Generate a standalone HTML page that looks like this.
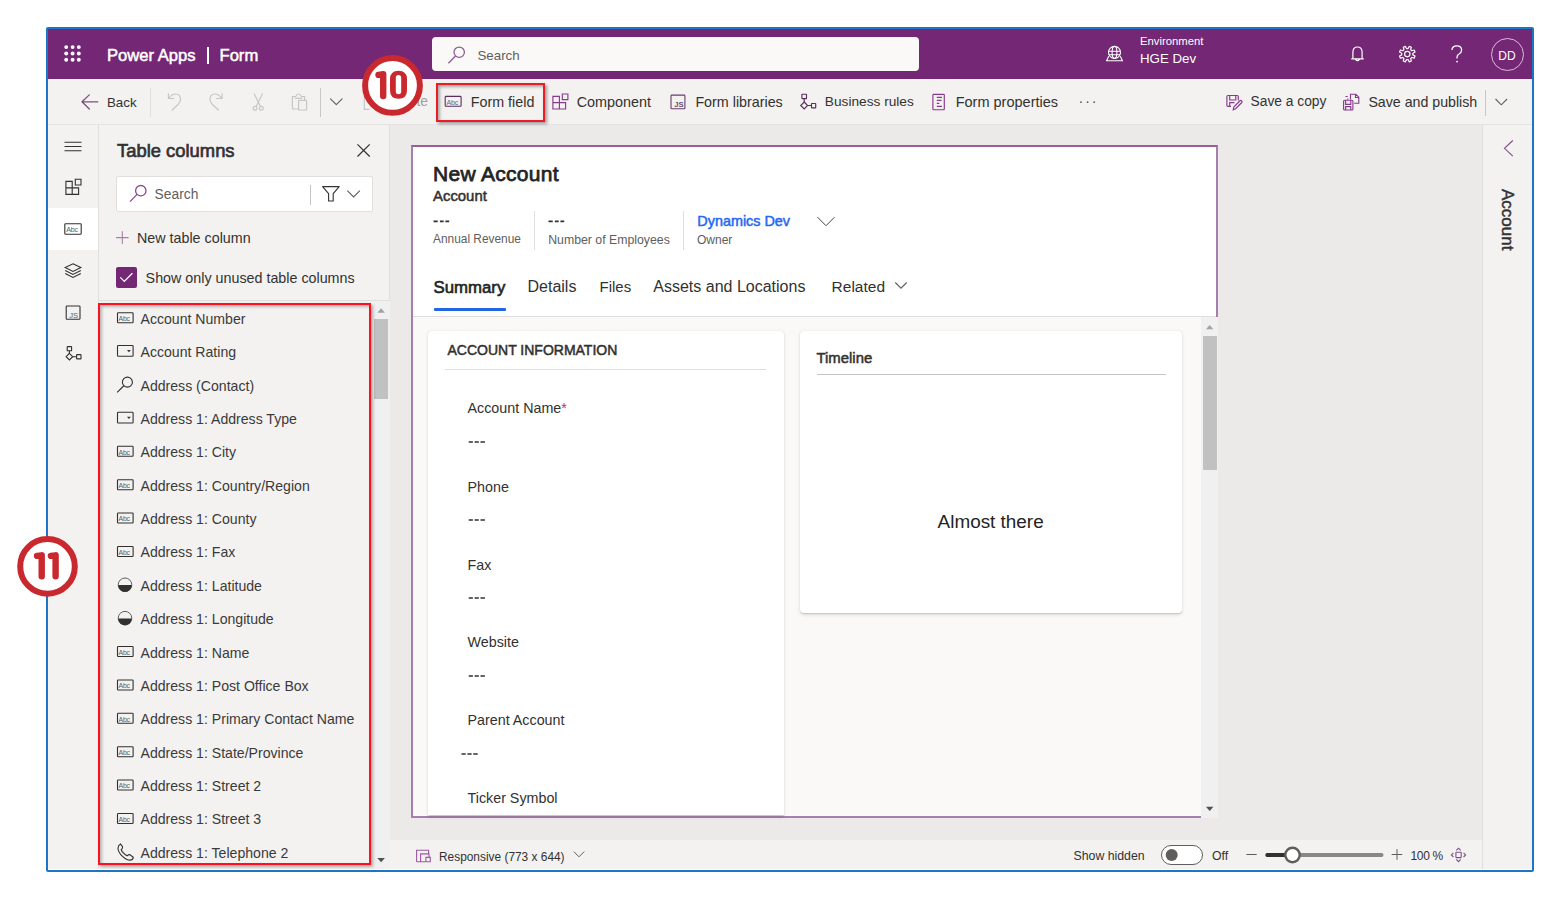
<!DOCTYPE html>
<html><head><meta charset="utf-8">
<style>
*{box-sizing:border-box;margin:0;padding:0}
html,body{width:1564px;height:900px;overflow:hidden;background:#fff;font-family:"Liberation Sans",sans-serif;color:#323130}
.a{position:absolute}
.t{position:absolute;white-space:nowrap;line-height:1}
svg{position:absolute;overflow:visible}
</style></head><body>
<!-- frame -->
<div class="a" style="left:46px;top:27px;width:1488px;height:845px;border:2px solid #1c76c4;border-radius:2px"></div>
<!-- header -->
<div class="a" style="left:48px;top:29px;width:1484px;height:50px;background:#742774"></div>
<!-- command bar -->
<div class="a" style="left:48px;top:79px;width:1484px;height:46px;background:#f3f2f1"></div>
<!-- left rail -->
<div class="a" style="left:48px;top:125px;width:51px;height:744px;background:#f3f2f1;border-right:1px solid #e1dfdd"></div>
<!-- panel -->
<div class="a" style="left:99px;top:125px;width:291px;height:744px;background:#f3f2f1;border-right:1px solid #e1dfdd"></div>
<!-- canvas -->
<div class="a" style="left:390px;top:125px;width:1093px;height:715px;background:#ebeae9"></div>
<!-- status bar -->
<div class="a" style="left:390px;top:840px;width:1093px;height:29px;background:#f3f2f1"></div>
<!-- right pane -->
<div class="a" style="left:1482px;top:125px;width:50px;height:744px;background:#f3f2f1;border-left:1px solid #e1dfdd"></div>
<!-- form card -->
<div class="a" style="left:411px;top:145px;width:807px;height:673px;background:#faf9f8;border:2px solid #a67fae;border-top-color:#985e9c"></div>
<div class="a" style="left:413px;top:147px;width:803px;height:170px;background:#fff;border-bottom:1px solid #e1dfdd"></div>

<!-- HEADER CONTENT -->
<svg style="left:0;top:0" width="1" height="1">
<g fill="#fff"><circle cx="66.2" cy="47.1" r="1.95"/><circle cx="72.6" cy="47.1" r="1.95"/><circle cx="78.8" cy="47.1" r="1.95"/><circle cx="66.2" cy="53.5" r="1.95"/><circle cx="72.6" cy="53.5" r="1.95"/><circle cx="78.8" cy="53.5" r="1.95"/><circle cx="66.2" cy="59.7" r="1.95"/><circle cx="72.6" cy="59.7" r="1.95"/><circle cx="78.8" cy="59.7" r="1.95"/></g>
</svg>
<div class="t" style="left:107px;top:47.5px;font-size:16.6px;color:#fff;-webkit-text-stroke:0.5px #fff">Power Apps</div>
<div class="a" style="left:207px;top:47px;width:1.6px;height:17px;background:#fff"></div>
<div class="t" style="left:219.5px;top:47.5px;font-size:16.6px;color:#fff;-webkit-text-stroke:0.5px #fff">Form</div>
<div class="a" style="left:432px;top:37px;width:487px;height:34px;background:#faf9f8;border-radius:4px"></div>
<svg style="left:0;top:0" width="1" height="1"><g fill="none" stroke="#8a5a8f" stroke-width="1.25"><circle cx="459.2" cy="52.2" r="5.2"/><path d="M455.5 56 L448.4 63.2"/></g></svg>
<div class="t" style="left:477.5px;top:49.1px;font-size:13.3px;color:#605e5c">Search</div>
<svg style="left:0;top:0" width="1" height="1"><g fill="none" stroke="#fff" stroke-width="1.1">
<circle cx="1114.5" cy="52.4" r="6"/><path d="M1108.8 51.2 H1120.2 M1109 54.8 H1120"/><ellipse cx="1114.5" cy="52.4" rx="2.4" ry="6"/>
<path d="M1108.7 56.2 L1106.6 60.7 H1122.4 L1120.3 56.2"/></g></svg>
<div class="t" style="left:1140px;top:36.4px;font-size:11.3px;color:#fff">Environment</div>
<div class="t" style="left:1140px;top:52.2px;font-size:13.3px;color:#fff">HGE Dev</div>
<svg style="left:0;top:0" width="1" height="1"><g fill="none" stroke="#fff" stroke-width="1.2">
<path d="M1351.2 58.8 H1363.8 M1352.9 58.8 V52.3 Q1352.9 47 1357.5 47 Q1362.1 47 1362.1 52.3 V58.8 M1355.4 59.1 Q1357.5 62.3 1359.6 59.1"/>
</g></svg>
<svg style="left:0;top:0" width="1" height="1"><g fill="none" stroke="#fff" stroke-width="1.2">
<path d="M1409.30 46.35 L1411.36 47.21 L1410.67 49.63 L1411.77 50.73 L1414.19 50.04 L1415.05 52.10 L1412.85 53.32 L1412.85 54.88 L1415.05 56.10 L1414.19 58.16 L1411.77 57.47 L1410.67 58.57 L1411.36 60.99 L1409.30 61.85 L1408.08 59.65 L1406.52 59.65 L1405.30 61.85 L1403.24 60.99 L1403.93 58.57 L1402.83 57.47 L1400.41 58.16 L1399.55 56.10 L1401.75 54.88 L1401.75 53.32 L1399.55 52.10 L1400.41 50.04 L1402.83 50.73 L1403.93 49.63 L1403.24 47.21 L1405.30 46.35 L1406.52 48.55 L1408.08 48.55 Z" stroke-linejoin="round"/>
<circle cx="1407.3" cy="54.1" r="2.7"/></g></svg>
<svg style="left:0;top:0" width="1" height="1"><g fill="none" stroke="#fff" stroke-width="1.3">
<path d="M1452 50 Q1452 45.8 1456.8 45.8 Q1461.6 45.8 1461.6 50 Q1461.6 52.6 1459 54 Q1457 55 1457 57.5 V58.5"/></g><circle cx="1457" cy="61.6" r="0.9" fill="#fff"/></svg>
<div class="a" style="left:1490.5px;top:37.5px;width:33px;height:33px;border:1.2px solid #d6bdd6;border-radius:50%"></div>
<div class="t" style="left:1490.5px;top:50.2px;width:33px;text-align:center;font-size:12px;color:#fff">DD</div>

<!-- COMMAND BAR CONTENT -->
<div class="a" style="left:48px;top:124px;width:1484px;height:1px;background:#e6e4e2"></div>
<svg style="left:0;top:0" width="1" height="1"><g fill="none" stroke-width="1.3" stroke-linecap="round" stroke-linejoin="round">
<path d="M89.3 94.9 L82 101.8 L89.3 109 M82.5 101.8 H97.8" stroke="#7d4f80"/>
<g stroke="#c8c6c4" stroke-width="1.2">
<path d="M168.4 93.9 V98.5 H173.8 M168.8 98.2 Q172 94 175.5 94 Q180.5 94 180.5 99.5 Q180.5 102 178 104.5 L172.2 110"/>
<path d="M222.1 93.9 V98.5 H216.7 M221.7 98.2 Q218.5 94 215 94 Q210 94 210 99.5 Q210 102 212.5 104.5 L218.3 110"/>
<path d="M254.3 94 L260.3 106.3 M262.3 94 L256.3 106.3"/><circle cx="255" cy="108.2" r="1.9"/><circle cx="261.3" cy="108.2" r="1.9"/>
<path d="M298.4 109 H292.4 V96.6 H295.7 Q296.6 94 298.5 94 Q300.4 94 301.3 96.6 H304.6 V100 M295.5 98.3 H301.6"/><rect x="298.6" y="100.4" width="8" height="9.6" rx="0.6"/>
<path d="M364.3 96 V109.4 H369"/>
</g>
<path d="M330.5 98.8 L336.3 104.6 L342.1 98.8" stroke="#605e5c" stroke-width="1.1"/>
</g></svg>
<div class="a" style="left:149.5px;top:87.5px;width:1px;height:29px;background:#e1dfdd"></div>
<div class="a" style="left:320px;top:87.5px;width:1px;height:29px;background:#c8c6c4"></div>
<div class="t" style="left:107px;top:95.74px;font-size:13.3px;color:#323130">Back</div>
<div class="t" style="left:388px;top:95.32px;font-size:13.8px;color:#a19f9d">Delete</div>
<!-- badge 10 -->
<svg style="left:0;top:0" width="1" height="1">
<circle cx="392.5" cy="85.4" r="27.4" fill="#fff" stroke="#c9282f" stroke-width="6"/>
<path d="M378.5 74.8 L383.2 74.2 V96" fill="none" stroke="#c9282f" stroke-width="6.4" stroke-linecap="round" stroke-linejoin="round"/>
<path d="M390 79.2 Q390 70.7 398.5 70.7 Q407 70.7 407 79.2 V90.3 Q407 98.8 398.5 98.8 Q390 98.8 390 90.3 Z M395.8 77.7 Q395.8 75 398.5 75 Q401.2 75 401.2 77.7 V91.5 Q401.2 94.2 398.5 94.2 Q395.8 94.2 395.8 91.5 Z" fill="#c9282f" fill-rule="evenodd"/>
</svg>
<!-- form field highlight -->
<div class="a" style="left:436px;top:82.5px;width:108.5px;height:39px;border:2px solid #ec1c24;box-shadow:2px 2px 3px rgba(0,0,0,0.35), inset 2px 2px 3px rgba(0,0,0,0.3)"></div>
<svg style="left:0;top:0" width="1" height="1"><g fill="none" stroke-width="1.1">
<rect x="445.2" y="96.4" width="15.9" height="9.9" rx="0.8" stroke="#5a2f5c"/>
<g stroke="#883a8c" stroke-width="1.15">
<path d="M552.9 96.3 H559.4 V109 H552.9 Z M552.9 102.6 H565.6 V109 H559.4 M562.3 94 H567.9 V99.6 H562.3 Z"/>
</g>
<rect x="671" y="95.1" width="13.9" height="13.7" rx="0.8" stroke="#6b3a6e"/>
<g stroke="#5a2f5c" stroke-width="1.15">
<rect x="801.9" y="94.2" width="4.6" height="4.4" rx="0.4"/><path d="M804.2 98.6 V102 M807.6 105.5 H811.5"/><path d="M804.2 102 L807.6 105.5 L804.2 109 L800.7 105.5 Z"/><rect x="811.5" y="103.5" width="4.2" height="4.3" rx="0.4"/>
</g>
<g stroke="#883a8c" stroke-width="1.15">
<rect x="932.9" y="94.3" width="11.4" height="15.4" rx="0.8"/><path d="M936.8 97.4 H942 M936.8 100.4 H941.5 M936.8 103.4 H939.3 M936.8 106.4 H942"/>
</g>
<g stroke="#883a8c" stroke-width="1.15">
<path d="M1231 106.4 H1228 Q1226.9 106.4 1226.9 105.3 V96.6 Q1226.9 95.5 1228 95.5 H1237.2 Q1238.3 95.5 1238.3 96.6 V100.5 M1229.7 95.5 V100 H1235.8 V95.5 M1229.7 106.2 V102.6 H1234.5"/>
<path d="M1233.2 109.8 L1233.8 107 L1240 100.8 Q1241 100 1241.8 100.8 Q1242.5 101.6 1241.8 102.5 L1235.6 108.7 Z"/>
</g>
<g stroke="#883a8c" stroke-width="1.15">
<rect x="1343.6" y="100.2" width="9.3" height="9.8" rx="1"/><path d="M1345.6 100.2 V104.3 H1350.8 V100.2 M1345.6 110 V106.6 H1350.8 V110 M1350.5 99.5 V94.2 H1355.8 L1358.8 97.2 V103.2 H1354.2 M1355.5 94.2 V97.5 H1358.8 M1345.5 96.5 H1347.7 M1347.7 98.5 V99.5"/>
</g>
</g>
<text x="446.6" y="104.6" font-family="Liberation Sans" font-size="7.2" fill="#6a6a80" letter-spacing="-0.3">Abc</text>
<text x="674.2" y="106.6" font-family="Liberation Sans" font-size="7.6" font-weight="700" fill="#6b4a6e">JS</text>
<g fill="#605e5c"><circle cx="1081" cy="102.2" r="0.9"/><circle cx="1087.6" cy="102.2" r="0.9"/><circle cx="1094.2" cy="102.2" r="0.9"/></g>
<path d="M1495.5 99 L1501.3 104.8 L1507.1 99" fill="none" stroke="#605e5c" stroke-width="1.1"/>
</svg>
<div class="a" style="left:1485px;top:90px;width:1px;height:26px;background:#c8c6c4"></div>
<div class="t" style="left:470.8px;top:94.9px;font-size:14.3px;color:#323130">Form field</div>
<div class="t" style="left:576.7px;top:94.81px;font-size:14.4px;color:#323130">Component</div>
<div class="t" style="left:695.4px;top:94.9px;font-size:14.3px;color:#323130">Form libraries</div>
<div class="t" style="left:824.8px;top:95.4px;font-size:13.7px;color:#323130">Business rules</div>
<div class="t" style="left:955.7px;top:94.73px;font-size:14.5px;color:#323130">Form properties</div>
<div class="t" style="left:1250.5px;top:95.32px;font-size:13.8px;color:#323130">Save a copy</div>
<div class="t" style="left:1368.4px;top:94.98px;font-size:14.2px;color:#323130">Save and publish</div>

<!-- RAIL -->
<div class="a" style="left:48px;top:208px;width:50px;height:42px;background:#fff"></div>
<svg style="left:0;top:0" width="1" height="1"><g fill="none" stroke="#323130" stroke-width="1.1">
<path d="M64.5 142.2 H81.5 M64.5 146.5 H81.5 M64.5 150.8 H81.5"/>
<path d="M65.9 181.4 H72.2 V194.4 H65.9 Z M65.9 187.9 H78.6 V194.4 H72.2 M75.3 179.3 H81 V185 H75.3 Z"/>
<rect x="64.8" y="223.8" width="16.4" height="10.4" rx="0.8"/>
<path d="M73 263.8 L80.8 267.6 L73 271.4 L65.2 267.6 Z M65.2 270.6 L73 274.4 L80.8 270.6 M65.2 273.6 L73 277.4 L80.8 273.6"/>
<rect x="66.2" y="306" width="13.8" height="13.2" rx="0.8"/>
<rect x="67.2" y="346.6" width="4.4" height="4.2" rx="0.4"/><path d="M69.4 350.8 V353.4 M72.7 356.7 H76.6"/><path d="M69.4 353.4 L72.7 356.7 L69.4 360 L66.1 356.7 Z"/><rect x="76.6" y="354.6" width="4.4" height="4.3" rx="0.4"/>
</g>
<text x="66.3" y="232" font-family="Liberation Sans" font-size="7.2" fill="#605e5c" letter-spacing="-0.3">Abc</text>
<text x="69.3" y="317.6" font-family="Liberation Sans" font-size="7.6" fill="#605e5c">JS</text>
</svg>

<!-- PANEL -->
<div class="t" style="left:117px;top:142.42px;font-size:18.4px;color:#323130;-webkit-text-stroke:0.65px #323130">Table columns</div>
<svg style="left:0;top:0" width="1" height="1"><path d="M357.5 144.3 L369.7 156.5 M369.7 144.3 L357.5 156.5" fill="none" stroke="#323130" stroke-width="1.2"/></svg>
<div class="a" style="left:116px;top:176px;width:256.5px;height:35.5px;background:#fff;border:1px solid #e1dfdd;border-radius:2px"></div>
<svg style="left:0;top:0" width="1" height="1"><g fill="none" stroke-width="1.3">
<circle cx="140.8" cy="190.7" r="5.2" stroke="#8a4a8e"/><path d="M137.1 194.4 L130 201.6" stroke="#8a4a8e"/>
<path d="M322.6 186.6 H339.2 L333.2 193.6 V201 H328.6 V193.6 Z" stroke="#323130" stroke-width="1.1" stroke-linejoin="round"/>
<path d="M347.3 190.7 L353.6 197 L359.9 190.7" stroke="#605e5c" stroke-width="1.1"/>
<path d="M116 237.6 H128.6 M122.3 231.3 V243.9" stroke="#a881ab" stroke-width="1.1"/>
</g></svg>
<div class="a" style="left:310px;top:185px;width:1px;height:20px;background:#c8c6c4"></div>
<div class="t" style="left:154.6px;top:188.1px;font-size:13.8px;color:#605e5c">Search</div>
<div class="t" style="left:137px;top:230.9px;font-size:14.3px;color:#323130">New table column</div>
<div class="a" style="left:116px;top:267px;width:20.5px;height:20.5px;background:#742774;border-radius:2px"></div>
<svg style="left:0;top:0" width="1" height="1"><path d="M120.3 277.4 L124.3 281.4 L132.4 273.3" fill="none" stroke="#fff" stroke-width="1.3"/></svg>
<div class="t" style="left:145.6px;top:270.9px;font-size:14.3px;color:#323130">Show only unused table columns</div>
<div class="a" style="left:99px;top:300px;width:290px;height:1px;background:#e1dfdd"></div>

<!-- LIST -->
<div class="t" style="left:140.5px;top:311.77px;font-size:14.1px;color:#3b3a39">Account Number</div>
<div class="t" style="left:140.5px;top:345.14px;font-size:14.1px;color:#3b3a39">Account Rating</div>
<div class="t" style="left:140.5px;top:378.52px;font-size:14.1px;color:#3b3a39">Address (Contact)</div>
<div class="t" style="left:140.5px;top:411.89px;font-size:14.1px;color:#3b3a39">Address 1: Address Type</div>
<div class="t" style="left:140.5px;top:445.27px;font-size:14.1px;color:#3b3a39">Address 1: City</div>
<div class="t" style="left:140.5px;top:478.64px;font-size:14.1px;color:#3b3a39">Address 1: Country/Region</div>
<div class="t" style="left:140.5px;top:512.02px;font-size:14.1px;color:#3b3a39">Address 1: County</div>
<div class="t" style="left:140.5px;top:545.39px;font-size:14.1px;color:#3b3a39">Address 1: Fax</div>
<div class="t" style="left:140.5px;top:578.77px;font-size:14.1px;color:#3b3a39">Address 1: Latitude</div>
<div class="t" style="left:140.5px;top:612.14px;font-size:14.1px;color:#3b3a39">Address 1: Longitude</div>
<div class="t" style="left:140.5px;top:645.52px;font-size:14.1px;color:#3b3a39">Address 1: Name</div>
<div class="t" style="left:140.5px;top:678.89px;font-size:14.1px;color:#3b3a39">Address 1: Post Office Box</div>
<div class="t" style="left:140.5px;top:712.27px;font-size:14.1px;color:#3b3a39">Address 1: Primary Contact Name</div>
<div class="t" style="left:140.5px;top:745.64px;font-size:14.1px;color:#3b3a39">Address 1: State/Province</div>
<div class="t" style="left:140.5px;top:779.02px;font-size:14.1px;color:#3b3a39">Address 1: Street 2</div>
<div class="t" style="left:140.5px;top:812.39px;font-size:14.1px;color:#3b3a39">Address 1: Street 3</div>
<div class="t" style="left:140.5px;top:845.77px;font-size:14.1px;color:#3b3a39">Address 1: Telephone 2</div>
<svg style="left:0;top:0" width="1" height="1"><g fill="none" stroke="#323130" stroke-width="1.1">
<rect x="117.5" y="312.80" width="15.6" height="10" rx="0.7"/>
<rect x="117.5" y="345.57" width="15.6" height="10.7" rx="0.8"/>
<circle cx="127.4" cy="382.15" r="5"/><path d="M123.8 385.75 L117.2 392.35"/>
<rect x="117.5" y="412.32" width="15.6" height="10.7" rx="0.8"/>
<rect x="117.5" y="446.30" width="15.6" height="10" rx="0.7"/>
<rect x="117.5" y="479.68" width="15.6" height="10" rx="0.7"/>
<rect x="117.5" y="513.05" width="15.6" height="10" rx="0.7"/>
<rect x="117.5" y="546.43" width="15.6" height="10" rx="0.7"/>
<circle cx="125" cy="584.80" r="6.8" stroke="#605e5c" stroke-width="1"/>
<circle cx="125" cy="618.18" r="6.8" stroke="#605e5c" stroke-width="1"/>
<rect x="117.5" y="646.55" width="15.6" height="10" rx="0.7"/>
<rect x="117.5" y="679.93" width="15.6" height="10" rx="0.7"/>
<rect x="117.5" y="713.30" width="15.6" height="10" rx="0.7"/>
<rect x="117.5" y="746.68" width="15.6" height="10" rx="0.7"/>
<rect x="117.5" y="780.05" width="15.6" height="10" rx="0.7"/>
<rect x="117.5" y="813.43" width="15.6" height="10" rx="0.7"/>
<path d="M120.5 844.00 Q118 845.30 118 848.30 Q118 852.30 122.5 856.30 Q126.5 860.10 130 860.10 Q132.8 860.10 133.3 857.30 L130 854.80 Q128.8 854.30 127.8 855.30 L127 855.80 Q125.5 855.30 123.6 853.20 Q121.6 851.30 121.2 849.60 L122 848.80 Q123 847.80 122.4 846.60 Z"/>
</g>
<text x="118.6" y="321.00" font-family="Liberation Sans" font-size="7" fill="#605e5c" letter-spacing="-0.3">Abc</text>
<path d="M127 350.07 H130.8 L128.9 352.18 Z" fill="#323130"/>
<path d="M127 416.82 H130.8 L128.9 418.93 Z" fill="#323130"/>
<text x="118.6" y="454.50" font-family="Liberation Sans" font-size="7" fill="#605e5c" letter-spacing="-0.3">Abc</text>
<text x="118.6" y="487.88" font-family="Liberation Sans" font-size="7" fill="#605e5c" letter-spacing="-0.3">Abc</text>
<text x="118.6" y="521.25" font-family="Liberation Sans" font-size="7" fill="#605e5c" letter-spacing="-0.3">Abc</text>
<text x="118.6" y="554.63" font-family="Liberation Sans" font-size="7" fill="#605e5c" letter-spacing="-0.3">Abc</text>
<path d="M118.2 585.10 H131.8 A6.8 6.8 0 0 1 118.2 585.10 Z" fill="#323130"/>
<path d="M118.2 618.48 H131.8 A6.8 6.8 0 0 1 118.2 618.48 Z" fill="#323130"/>
<text x="118.6" y="654.75" font-family="Liberation Sans" font-size="7" fill="#605e5c" letter-spacing="-0.3">Abc</text>
<text x="118.6" y="688.13" font-family="Liberation Sans" font-size="7" fill="#605e5c" letter-spacing="-0.3">Abc</text>
<text x="118.6" y="721.50" font-family="Liberation Sans" font-size="7" fill="#605e5c" letter-spacing="-0.3">Abc</text>
<text x="118.6" y="754.88" font-family="Liberation Sans" font-size="7" fill="#605e5c" letter-spacing="-0.3">Abc</text>
<text x="118.6" y="788.25" font-family="Liberation Sans" font-size="7" fill="#605e5c" letter-spacing="-0.3">Abc</text>
<text x="118.6" y="821.63" font-family="Liberation Sans" font-size="7" fill="#605e5c" letter-spacing="-0.3">Abc</text>
</svg>
<!-- scrollbar + highlight -->
<div class="a" style="left:373.5px;top:301px;width:16px;height:568px;background:#f0f0f0"></div>
<div class="a" style="left:374.2px;top:319px;width:13.6px;height:80px;background:#c1c1c1"></div>
<svg style="left:0;top:0" width="1" height="1"><path d="M377.3 312.8 L381.1 308.3 L384.9 312.8 Z" fill="#a3a3a3"/><path d="M377.3 858 L381.1 862.2 L384.9 858 Z" fill="#505050"/></svg>
<div class="a" style="left:98px;top:303px;width:273px;height:562px;border:2px solid #fe1020;box-shadow:2px 2px 3px rgba(0,0,0,0.3), inset 2px 2px 3px rgba(0,0,0,0.25)"></div>
<!-- badge 11 -->
<svg style="left:0;top:0" width="1" height="1">
<circle cx="47.5" cy="566.4" r="27.3" fill="#fff" stroke="#c9282f" stroke-width="6"/>
<path d="M37 555.9 L41.7 555.3 V576.3 M50.9 555.9 L55.6 555.3 V576.3" fill="none" stroke="#c9282f" stroke-width="6.4" stroke-linecap="round" stroke-linejoin="round"/>
</svg>

<!-- FORM HEADER -->
<div class="t" style="left:433px;top:163.32px;font-size:21px;color:#242424;letter-spacing:0.3px;-webkit-text-stroke:0.75px #242424">New Account</div>
<div class="t" style="left:433px;top:188.59px;font-size:14.9px;color:#323130;-webkit-text-stroke:0.5px #323130">Account</div>
<div class="t" style="left:433px;top:234.3px;font-size:11.9px;color:#605e5c">Annual Revenue</div>
<div class="t" style="left:548.2px;top:234.3px;font-size:12.3px;color:#605e5c">Number of Employees</div>
<div class="t" style="left:697.3px;top:214.31px;font-size:14.4px;color:#2468f2;-webkit-text-stroke:0.5px #2468f2">Dynamics Dev</div>
<div class="t" style="left:697px;top:234.3px;font-size:12px;color:#605e5c">Owner</div>
<div class="a" style="left:534px;top:211px;width:1px;height:39px;background:#e1dfdd"></div>
<div class="a" style="left:683px;top:211px;width:1px;height:39px;background:#e1dfdd"></div>
<svg style="left:0;top:0" width="1" height="1"><g fill="none" stroke="#323130" stroke-width="1.6">
<path d="M433.5 221.4 H437.7 M439.9 221.4 H443.7 M445.4 221.4 H449.2 M548.5 221.4 H552.7 M554.9 221.4 H558.7 M560.4 221.4 H564.2"/>
</g>
<path d="M817.5 217.2 L826 225.7 L834.5 217.2" fill="none" stroke="#484644" stroke-width="1"/>
<path d="M895.3 282.5 L901 288.2 L906.7 282.5" fill="none" stroke="#605e5c" stroke-width="1.1"/>
</svg>
<div class="t" style="left:433.5px;top:279.78px;font-size:16.8px;color:#242424;-webkit-text-stroke:0.6px #242424">Summary</div>
<div class="t" style="left:527.5px;top:278.9px;font-size:16px;color:#323130">Details</div>
<div class="t" style="left:599.5px;top:278.9px;font-size:15px;color:#323130">Files</div>
<div class="t" style="left:653.3px;top:278.9px;font-size:16px;color:#323130">Assets and Locations</div>
<div class="t" style="left:831.6px;top:278.9px;font-size:15.5px;color:#323130">Related</div>
<div class="a" style="left:433.5px;top:308px;width:72.5px;height:3px;background:#2266e3;border-radius:1px"></div>

<!-- SECTION CARD -->
<div class="a" style="left:428px;top:331px;width:355.5px;height:484px;background:#fff;border-radius:4px 4px 0 0;box-shadow:0 1.6px 3.6px rgba(0,0,0,0.13),0 0.3px 0.9px rgba(0,0,0,0.11)"></div>
<div class="t" style="left:447.5px;top:343.45px;font-size:14px;color:#323130;-webkit-text-stroke:0.5px #323130">ACCOUNT INFORMATION</div>
<div class="a" style="left:445.3px;top:369px;width:321px;height:1px;background:#e1dfdd"></div>
<div class="t" style="left:467.5px;top:401.2px;font-size:14.3px;color:#323130">Account Name<span style="color:#c4314b">*</span></div>
<div class="t" style="left:467.5px;top:479.9px;font-size:14.3px;color:#323130">Phone</div>
<div class="t" style="left:467.5px;top:558px;font-size:14.3px;color:#323130">Fax</div>
<div class="t" style="left:467.5px;top:635.3px;font-size:14.3px;color:#323130">Website</div>
<div class="t" style="left:467.5px;top:713.3px;font-size:14.3px;color:#323130">Parent Account</div>
<div class="t" style="left:467.5px;top:791.3px;font-size:14.3px;color:#323130">Ticker Symbol</div>

<svg style="left:0;top:0" width="1" height="1"><g fill="none" stroke="#323130" stroke-width="1.6">
<path d="M468.7 442 H472.9 M474.6 442 H478.8 M480.5 442 H484.9"/>
<path d="M468.7 520 H472.9 M474.6 520 H478.8 M480.5 520 H484.9"/>
<path d="M468.7 598 H472.9 M474.6 598 H478.8 M480.5 598 H484.9"/>
<path d="M468.7 676 H472.9 M474.6 676 H478.8 M480.5 676 H484.9"/>
<path d="M461.5 754 H465.7 M467.4 754 H471.6 M473.3 754 H477.7"/>
</g></svg>
<!-- TIMELINE CARD -->
<div class="a" style="left:800px;top:331px;width:382px;height:282px;background:#fff;border-radius:4px;box-shadow:0 1.6px 3.6px rgba(0,0,0,0.13),0 0.3px 0.9px rgba(0,0,0,0.11)"></div>
<div class="t" style="left:816.5px;top:351.29px;font-size:14.9px;color:#323130;-webkit-text-stroke:0.5px #323130">Timeline</div>
<div class="a" style="left:816.7px;top:374px;width:349px;height:1px;background:#c8c6c4"></div>
<div class="t" style="left:937.6px;top:513.2px;font-size:18.9px;color:#242424">Almost there</div>

<!-- FORM SCROLLBAR -->
<div class="a" style="left:1201px;top:317px;width:17px;height:501px;background:#f0f0f0"></div>
<div class="a" style="left:1203px;top:336px;width:13.5px;height:134px;background:#c1c1c1"></div>
<svg style="left:0;top:0" width="1" height="1"><path d="M1206 329.3 L1209.7 325 L1213.4 329.3 Z" fill="#a3a3a3"/><path d="M1206 806.7 L1209.7 811.1 L1213.4 806.7 Z" fill="#505050"/></svg>

<!-- STATUS BAR -->
<svg style="left:0;top:0" width="1" height="1"><g fill="none" stroke="#742774" stroke-width="1.1">
<path d="M416.6 861.8 V850.2 H428.6 V853.8 M420.6 861.8 V853.9 H429 V857.3 M416.6 861.8 H430.3 V857.4 H425.9 V861.8" stroke="#9a58a0"/>
</g>
<path d="M573.8 851.6 L579 856.8 L584.2 851.6" fill="none" stroke="#605e5c" stroke-width="1"/>
</svg>
<div class="t" style="left:439px;top:851.9px;font-size:11.9px;color:#323130">Responsive (773 x 644)</div>
<div class="t" style="left:1073.5px;top:849.6px;font-size:12.3px;color:#323130">Show hidden</div>
<div class="a" style="left:1161.3px;top:845px;width:41.4px;height:20px;border:1px solid #605e5c;border-radius:10px;background:#fff"></div>
<svg style="left:0;top:0" width="1" height="1">
<circle cx="1171.7" cy="855" r="6" fill="#605e5c"/>
<path d="M1246.4 854.5 H1256.7 M1391.6 854.5 H1402.3 M1397 849.2 V859.8" stroke="#605e5c" stroke-width="1" fill="none"/>
<path d="M1267.4 854.9 H1381.5" stroke="#8a8886" stroke-width="4" stroke-linecap="round"/>
<path d="M1267.4 854.9 H1290" stroke="#323130" stroke-width="4" stroke-linecap="round"/>
<circle cx="1292.5" cy="855" r="7.2" fill="#fff" stroke="#605e5c" stroke-width="2.4"/>
<g fill="none" stroke="#7a4f86" stroke-width="1.1"><rect x="1455.9" y="852.3" width="5.3" height="5.3" rx="0.5"/><path d="M1456.3 850.4 L1458.5 848.2 L1460.7 850.4 M1456.3 859.4 L1458.5 861.6 L1460.7 859.4 M1453.4 852.9 L1451.4 854.95 L1453.4 857 M1463.6 852.9 L1465.6 854.95 L1463.6 857"/></g>
</svg>
<div class="t" style="left:1211.9px;top:849.6px;font-size:12.3px;color:#323130">Off</div>
<div class="t" style="left:1410.4px;top:849.6px;font-size:12px;color:#323130;letter-spacing:-0.3px">100 %</div>

<!-- RIGHT PANE -->
<svg style="left:0;top:0" width="1" height="1"><path d="M1512.8 140.5 L1504.5 148.3 L1512.8 156.1" fill="none" stroke="#7d4f80" stroke-width="1.1"/></svg>
<div class="t" style="left:1515.5px;top:188.5px;font-size:17px;color:#323130;-webkit-text-stroke:0.5px #323130;transform-origin:0 0;transform:rotate(90deg)">Account</div>

<!-- CONTENT -->
</body></html>
